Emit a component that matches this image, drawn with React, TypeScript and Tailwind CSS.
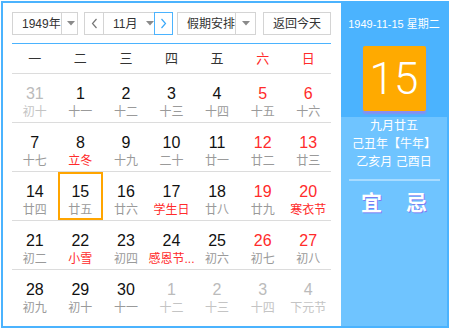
import React from 'react';

type Day = {
  d: number;
  lunar: string;
  other?: boolean;
  weekend?: boolean;
  festival?: boolean;
  today?: boolean;
};

const weekdays = ['一', '二', '三', '四', '五', '六', '日'];

const rows: Day[][] = [
  [
    { d: 31, lunar: '初十', other: true },
    { d: 1, lunar: '十一' },
    { d: 2, lunar: '十二' },
    { d: 3, lunar: '十三' },
    { d: 4, lunar: '十四' },
    { d: 5, lunar: '十五', weekend: true },
    { d: 6, lunar: '十六', weekend: true },
  ],
  [
    { d: 7, lunar: '十七' },
    { d: 8, lunar: '立冬', festival: true },
    { d: 9, lunar: '十九' },
    { d: 10, lunar: '二十' },
    { d: 11, lunar: '廿一' },
    { d: 12, lunar: '廿二', weekend: true },
    { d: 13, lunar: '廿三', weekend: true },
  ],
  [
    { d: 14, lunar: '廿四' },
    { d: 15, lunar: '廿五', today: true },
    { d: 16, lunar: '廿六' },
    { d: 17, lunar: '学生日', festival: true },
    { d: 18, lunar: '廿八' },
    { d: 19, lunar: '廿九', weekend: true },
    { d: 20, lunar: '寒衣节', weekend: true, festival: true },
  ],
  [
    { d: 21, lunar: '初二' },
    { d: 22, lunar: '小雪', festival: true },
    { d: 23, lunar: '初四' },
    { d: 24, lunar: '感恩节...', festival: true },
    { d: 25, lunar: '初六' },
    { d: 26, lunar: '初七', weekend: true },
    { d: 27, lunar: '初八', weekend: true },
  ],
  [
    { d: 28, lunar: '初九' },
    { d: 29, lunar: '初十' },
    { d: 30, lunar: '十一' },
    { d: 1, lunar: '十二', other: true },
    { d: 2, lunar: '十三', other: true },
    { d: 3, lunar: '十四', other: true },
    { d: 4, lunar: '下元节', other: true },
  ],
];

function Caret() {
  return (
    <svg width="8" height="5" viewBox="0 0 8 5">
      <path d="M0 0 L8 0 L4 4.5 Z" fill="#8a8a8a" />
    </svg>
  );
}

function DayCell({ day }: { day: Day }) {
  const numColor = day.other ? 'text-[#bbbbbb]' : day.weekend ? 'text-[#ff2b2b]' : 'text-[#111]';
  const lunarColor = day.other
    ? 'text-[#c4c4c4]'
    : day.festival
      ? 'text-[#ff2b2b]'
      : 'text-[#9a9a9a]';

  return (
    <div
      className={`flex h-[48px] flex-col items-center ${
        day.today ? 'border-2 border-[#ffa500] pt-[8px]' : 'pt-[10px]'
      }`}
    >
      <span className={`text-[16px] leading-[19px] ${numColor}`}>{day.d}</span>
      <span className={`mt-[2px] text-[12px] leading-[15px] whitespace-nowrap ${lunarColor}`}>
        {day.lunar}
      </span>
    </div>
  );
}

export default function App() {
  return (
    <div className="ml-px mt-px flex h-[327px] w-[448px] border-2 border-[#4bb3fe] bg-white font-['Liberation_Sans','Noto_Sans_CJK_SC',sans-serif]">
      {/* 左侧日历 */}
      <div className="flex w-[337px] flex-col px-[9px] pt-[9px]">
        <div className="flex h-[23px] items-stretch whitespace-nowrap text-[12px] text-[#333]">
          {/* 年份 */}
          <div className="flex w-[66px] shrink-0 border border-[#d4d4d4]">
            <span className="flex flex-1 items-center pl-[9px]">1949年</span>
            <span className="flex w-[20px] shrink-0 items-center justify-center border-l border-[#d4d4d4]">
              <Caret />
            </span>
          </div>

          {/* 月份 */}
          <div className="ml-[6px] flex w-[87px] shrink-0">
            <span className="flex w-[20px] shrink-0 items-center justify-center border border-[#d4d4d4]">
              <svg width="7" height="11" viewBox="0 0 7 11">
                <path d="M5.5 1 L1.5 5.5 L5.5 10" fill="none" stroke="#777" strokeWidth="1.2" />
              </svg>
            </span>
            <span className="flex flex-1 items-center border-y border-[#d4d4d4] pl-[9px]">
              11月
              <span className="ml-[9px] flex">
                <Caret />
              </span>
            </span>
            <span className="flex w-[19px] shrink-0 items-center justify-center border border-[#4bb3fe]">
              <svg width="7" height="11" viewBox="0 0 7 11">
                <path d="M1.5 1 L5.5 5.5 L1.5 10" fill="none" stroke="#3aa8f8" strokeWidth="1.2" />
              </svg>
            </span>
          </div>

          {/* 假期 */}
          <div className="ml-[6px] flex w-[79px] shrink-0 border border-[#d4d4d4]">
            <span className="flex flex-1 items-center pl-[9px]">假期安排</span>
            <span className="flex w-[20px] shrink-0 items-center justify-center border-l border-[#d4d4d4]">
              <Caret />
            </span>
          </div>

          <button className="ml-[7px] flex w-[68px] shrink-0 items-center justify-center border border-[#d4d4d4] bg-white text-[12px] text-[#333]">
            返回今天
          </button>
        </div>

        <div className="mt-[8px] h-px bg-[#4bb3fe]" />

        {/* 星期 */}
        <div className="grid h-[30px] grid-cols-7 border-b border-[#dcdcdc] text-[13px]">
          {weekdays.map((w, i) => (
            <div
              key={w}
              className={`flex items-center justify-center ${i > 4 ? 'text-[#ff2b2b]' : 'text-[#333]'}`}
            >
              {w}
            </div>
          ))}
        </div>

        {rows.map((row, ri) => (
          <div
            key={ri}
            className={`grid grid-cols-7 ${ri < rows.length - 1 ? 'border-b border-[#dcdcdc]' : ''}`}
          >
            {row.map((day, di) => (
              <DayCell key={di} day={day} />
            ))}
          </div>
        ))}
      </div>

      {/* 右侧详情 */}
      <div className="ml-[1px] flex w-[106px] flex-col bg-[#6fc4ff] text-white">
        <div className="flex flex-col items-center bg-[#4bb3fe] pt-[13px] pb-[6px]">
          <span className="whitespace-nowrap text-[11px] leading-[16px]">1949-11-15 星期二</span>
          <div className="mt-[14px] flex h-[65px] w-[63px] items-center justify-center rounded-[2px] bg-[#ffaa00] shadow-[0_3px_2px_#8a8ef0]">
            <span className="font-['Roboto'] text-[44px] font-light leading-none">15</span>
          </div>
        </div>

        <div className="flex flex-col items-center text-[12px] leading-[18px]">
          <span>九月廿五</span>
          <span>己丑年【牛年】</span>
          <span>乙亥月 己酉日</span>
          <div className="mt-[8px] h-[2px] w-[91px] bg-white/40" />
          <div className="mt-[8px] flex w-full justify-center gap-[24px] text-[21px] font-bold leading-[28px] [text-shadow:1px_1px_0_#7b7cf2]">
            <span>宜</span>
            <span>忌</span>
          </div>
        </div>
      </div>
    </div>
  );
}
